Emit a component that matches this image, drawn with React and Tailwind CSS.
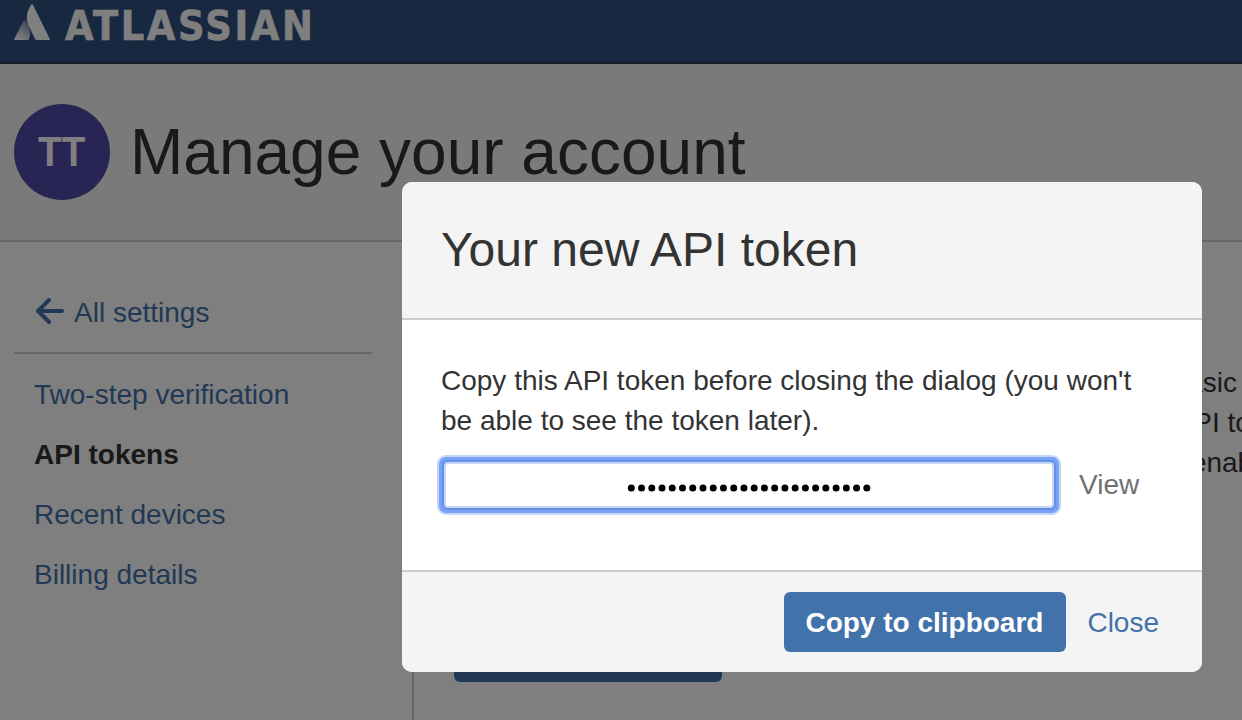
import React from "react";

const links = [
  { label: "Two-step verification", active: false },
  { label: "API tokens", active: true },
  { label: "Recent devices", active: false },
  { label: "Billing details", active: false },
];

function Logo() {
  return (
    <div className="flex items-start text-white">
      <svg className="mt-1 h-9 w-9 shrink-0" viewBox="0 0 36 36">
        <defs>
          <linearGradient id="peak" x1="0.75" y1="0.1" x2="0.35" y2="0.95">
            <stop offset="0" stopColor="#8394ad" />
            <stop offset="1" stopColor="#ffffff" />
          </linearGradient>
        </defs>
        <path d="M9.7 16.4Q10.3 15.6 11 16.4C15.6 21.5 17.2 28.5 15 35.2Q14.6 36 13.7 36H.9Q-.2 36 .3 34.9Z" fill="url(#peak)" />
        <path d="M17.2.6Q18-.6 18.8.6L35.7 34.8Q36.2 36 35 36H22.8Q21.6 36 21.1 35L14.6 21.8C11.4 15.2 12.5 8 17.2.6Z" fill="#fff" />
      </svg>
      <span className="ml-[15px] font-['DejaVu_Sans_Condensed','DejaVu_Sans',sans-serif] text-[41px] leading-[52px] font-bold tracking-[2.6px] [font-stretch:condensed] [-webkit-text-stroke:0.6px_white]">
        ATLASSIAN
      </span>
    </div>
  );
}

function Page() {
  return (
    <div className="flex h-full flex-col">
      <header className="flex h-16 shrink-0 border-b-2 border-[#2e3d54] bg-[#2e5080] pl-3.5">
        <Logo />
      </header>
      <div className="flex h-[178px] shrink-0 items-center border-b-2 border-[#ccc] bg-[#f5f5f5] pl-3.5">
        <div className="flex size-24 items-center justify-center rounded-full bg-[#5148a6] pb-0.5 text-[42px] font-bold text-white">
          <span className="scale-x-92">TT</span>
        </div>
        <h1 className="ml-5 text-[64px] leading-[72px] whitespace-nowrap">Manage your account</h1>
      </div>
      <div className="flex flex-1 bg-white">
        <nav className="flex w-[414px] shrink-0 flex-col border-r-2 border-[#ccc] pl-3.5 text-[#4272aa]">
          <div className="mr-10 flex h-28 items-center border-b-2 border-[#ccc] pt-8 pl-[22px]">
            <svg className="mb-1 h-7 w-7" viewBox="0 0 28 28" fill="none" stroke="currentColor" strokeWidth="4" strokeLinecap="round" strokeLinejoin="round">
              <path d="M13 3L2 14L13 25M2.5 14H26" />
            </svg>
            <span className="ml-2.5">All settings</span>
          </div>
          <ul className="mt-[11px] pl-5">
            {links.map((l) => (
              <li key={l.label} className={l.active ? "h-[60px] leading-[60px] font-bold text-[#333]" : "h-[60px] leading-[60px]"}>
                {l.label}
              </li>
            ))}
          </ul>
        </nav>
        <main className="flex flex-1 flex-col items-start pt-[121px] pl-10">
          <p className="w-full overflow-hidden text-right leading-10 whitespace-nowrap">
            <span className="block pr-[5px]">basic</span>
            <span className="-mr-[54px] block">API token</span>
            <span className="-mr-[33px] block">enable</span>
          </p>
          <div className="mt-[139px] h-[60px] w-[268px] rounded-md bg-[#4272aa]" />
        </main>
      </div>
    </div>
  );
}

function Dialog() {
  return (
    <section className="flex h-[490px] w-[800px] flex-col overflow-hidden rounded-[10px] bg-white">
      <header className="flex h-[138px] items-center border-b-2 border-[#ccc] bg-[#f4f4f4] pl-[39px]">
        <h2 className="text-[48px] leading-[56px]">Your new API token</h2>
      </header>
      <div className="h-[250px] pr-10 pl-[35px] pt-[41px]">
        <p className="pl-1 leading-10">
          Copy this API token before closing the dialog (you won't
          <br />
          be able to see the token later).
        </p>
        <div className="mt-3.5 flex items-center">
          <div className="h-[60px] w-[624px] shrink-0 rounded-[9px] bg-[#c5d7f9] p-0.5">
            <div className="h-full w-full rounded-[7px] bg-[#78a2f5] p-[3px]">
              <div className="h-full w-full rounded-md bg-[#6690e4] p-0.5">
                <div className="flex h-full w-full items-center justify-center rounded-[4px] border-2 border-[#c5d7f9] bg-white">
                  <svg className="mt-1.5 h-2 w-[246px]" viewBox="0 0 246 8">
                    {Array.from({ length: 24 }, (_, i) => (
                      <circle key={i} cx={5.3 + i * 10.24} cy="4" r="3.5" fill="#000" />
                    ))}
                  </svg>
                </div>
              </div>
            </div>
          </div>
          <button className="ml-[18px] text-[#707070]">View</button>
        </div>
      </div>
      <footer className="flex h-[102px] items-center justify-end border-t-2 border-[#ccc] bg-[#f4f4f4] pr-[43px]">
        <button className="h-[60px] w-[282px] rounded-md bg-[#4272aa] pt-px pr-0.5 font-bold text-white">Copy to clipboard</button>
        <button className="ml-[21px] pt-0.5 text-[#4272aa]">Close</button>
      </footer>
    </section>
  );
}

export default function App() {
  return (
    <div className="relative h-[720px] w-[1242px] overflow-hidden font-['Liberation_Sans',Arial,sans-serif] text-[28px] text-[#333]">
      <Page />
      <div className="absolute inset-0 flex justify-end bg-black/50 pt-[182px] pr-10">
        <Dialog />
      </div>
    </div>
  );
}
